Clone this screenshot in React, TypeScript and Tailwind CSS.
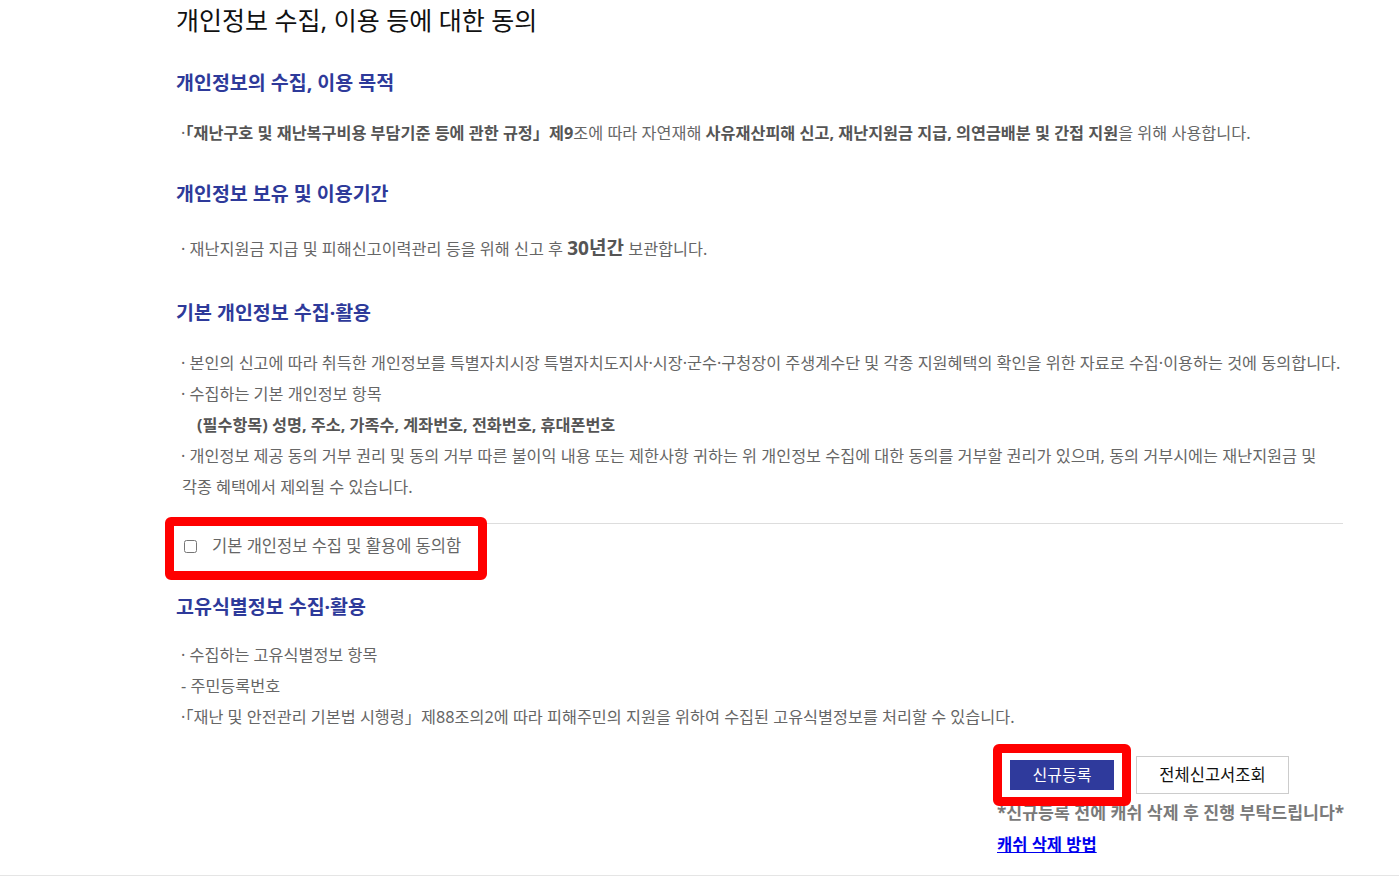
import React from "react";

const font = { fontFamily: '"Noto Sans", "Noto Sans CJK KR", sans-serif' };

const Heading: React.FC<{ children: React.ReactNode; className?: string }> = ({ children, className }) => (
    <h3 className={"pl-[11px] text-[19.5px] leading-[30px] font-bold text-[#2e3a9a] " + (className || "")}>
        {children}
    </h3>
);

const Line: React.FC<{ children: React.ReactNode; className?: string }> = ({ children, className }) => (
    <p className={"pl-[16px] text-[16.25px] leading-[31px] text-[#666] whitespace-nowrap " + (className || "")}>
        {children}
    </p>
);

const RedBox: React.FC<{ className: string }> = ({ className }) => (
    <span className={"pointer-events-none absolute z-10 rounded-[6px] border-[9px] border-[#ff0000] " + className}></span>
);

export default function App() {
    return (
        <div className="w-[1399px] min-h-[877px] bg-white" style={font}>
            <div className="border-b border-[#e5e5e5] pb-[17px]">
                <div className="ml-[165px] w-[1178px]">
                    <h1 className="pl-[11px] text-[25px] leading-[40px] text-[#111]">개인정보 수집, 이용 등에 대한 동의</h1>

                    <Heading className="mt-[28px]">개인정보의 수집, 이용 목적</Heading>
                    <Line className="mt-[20px]">
                        ·<b className="text-[#555]">「재난구호 및 재난복구비용 부담기준 등에 관한 규정」제9</b>조에 따라 자연재해{" "}
                        <b className="text-[#555]">사유재산피해 신고, 재난지원금 지급, 의연금배분 및 간접 지원</b>을 위해 사용합니다.
                    </Line>

                    <Heading className="mt-[30px]">개인정보 보유 및 이용기간</Heading>
                    <Line className="mt-[24px]">
                        · 재난지원금 지급 및 피해신고이력관리 등을 위해 신고 후{" "}
                        <b className="text-[19px] text-[#555]">30년간</b> 보관합니다.
                    </Line>

                    <Heading className="mt-[33px]">기본 개인정보 수집·활용</Heading>
                    <div className="mt-[20px]">
                        <Line>
                            · 본인의 신고에 따라 취득한 개인정보를 특별자치시장 특별자치도지사·시장·군수·구청장이 주생계수단 및 각종 지원혜택의 확인을 위한 자료로 수집·이용하는 것에 동의합니다.
                        </Line>
                        <Line>· 수집하는 기본 개인정보 항목</Line>
                        <Line className="pl-[32px]">
                            <b className="text-[#555]">(필수항목) 성명, 주소, 가족수, 계좌번호, 전화번호, 휴대폰번호</b>
                        </Line>
                        <Line>
                            · 개인정보 제공 동의 거부 권리 및 동의 거부 따른 불이익 내용 또는 제한사항 귀하는 위 개인정보 수집에 대한 동의를 거부할 권리가 있으며, 동의 거부시에는 재난지원금 및
                        </Line>
                        <Line className="pl-[17px]">각종 혜택에서 제외될 수 있습니다.</Line>
                    </div>

                    <div className="relative mt-[20px] border-t border-[#dddddd]">
                        <RedBox className="left-0 top-[-7px] h-[63px] w-[322px]" />
                        <label className="flex h-[44px] items-center pl-[19px] text-[16.5px] text-[#666]">
                            <input type="checkbox" className="m-0 h-[13px] w-[13px]" />
                            <span className="ml-[15px]">기본 개인정보 수집 및 활용에 동의함</span>
                        </label>
                    </div>

                    <Heading className="mt-[24px]">고유식별정보 수집·활용</Heading>
                    <div className="mt-[18px]">
                        <Line>· 수집하는 고유식별정보 항목</Line>
                        <Line>- 주민등록번호</Line>
                        <Line>·「재난 및 안전관리 기본법 시행령」제88조의2에 따라 피해주민의 지원을 위하여 수집된 고유식별정보를 처리할 수 있습니다.</Line>
                    </div>

                    <div className="ml-auto mt-[23px] w-[346px]">
                        <div className="flex items-center pl-[13px]">
                            <span className="relative">
                                <RedBox className="left-[-17px] top-[-16px] h-[62px] w-[138px]" />
                                <button className="flex h-[30px] w-[104px] items-center justify-center bg-[#2f3a9c] text-[16px] text-white">
                                    신규등록
                                </button>
                            </span>
                            <button className="ml-[22px] flex h-[38px] w-[153px] items-center justify-center border border-[#cccccc] bg-white text-[16.5px] text-[#111]">
                                전체신고서조회
                            </button>
                        </div>
                        <p className="mt-[6px] whitespace-nowrap text-[17.25px] leading-[26px] font-bold text-[#7a7a7a]">
                            *신규등록 전에 캐쉬 삭제 후 진행 부탁드립니다*
                        </p>
                        <a href="#" className="mt-[6px] inline-block text-[16.5px] leading-[26px] font-bold text-[#0000ee] underline">
                            캐쉬 삭제 방법
                        </a>
                    </div>
                </div>
            </div>
        </div>
    );
}
